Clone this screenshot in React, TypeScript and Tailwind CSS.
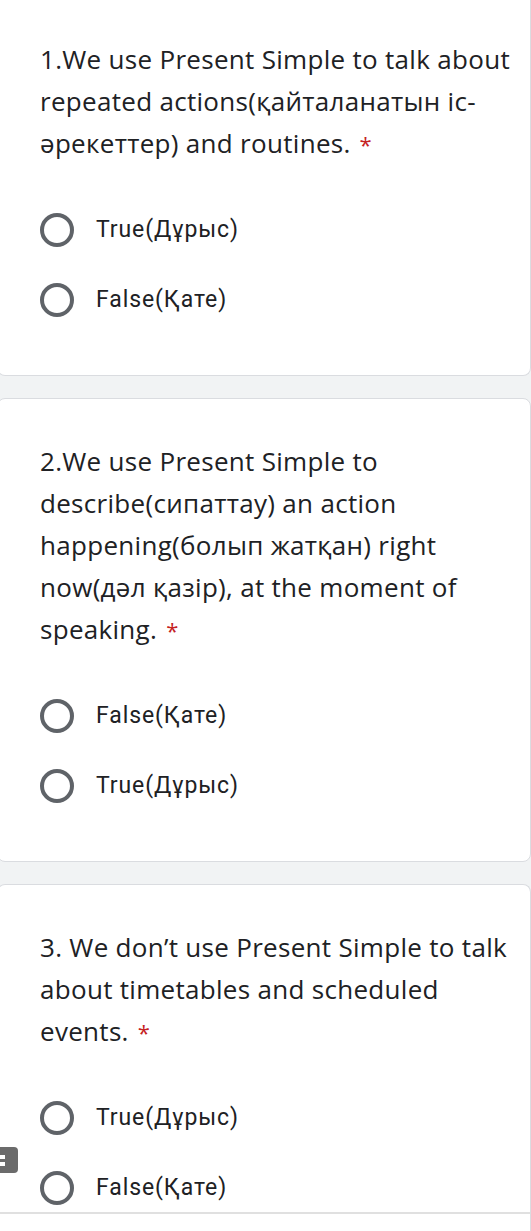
import React from 'react';

type Question = {
  lines: string[];
  options: string[];
  first?: boolean;
  bottomRule?: boolean;
};

const questions: Question[] = [
  {
    lines: [
      '1.We use Present Simple to talk about',
      'repeated actions(қайталанатын іс-',
      'әрекеттер) and routines.',
    ],
    options: ['True(Дұрыс)', 'False(Қате)'],
    first: true,
  },
  {
    lines: [
      '2.We use Present Simple to',
      'describe(сипаттау) an action',
      'happening(болып жатқан) right',
      'now(дәл қазір), at the moment of',
      'speaking.',
    ],
    options: ['False(Қате)', 'True(Дұрыс)'],
  },
  {
    lines: [
      '3. We don’t use Present Simple to talk',
      'about timetables and scheduled',
      'events.',
    ],
    options: ['True(Дұрыс)', 'False(Қате)'],
    bottomRule: true,
  },
];

const Radio = () => (
  <span className="w-[34px] h-[34px] rounded-full border-[4px] border-[#5f6368] shrink-0" />
);

const QuestionCard = ({ q }: { q: Question }) => (
  <div
    className={`relative -ml-[3px] bg-white border border-[#dadce0] rounded-lg pl-[42px] pr-4 ${
      q.first ? 'border-t-0 rounded-t-none pt-[38px]' : 'pt-[41px]'
    } ${q.bottomRule ? 'pb-0 border-b-0 rounded-b-none' : 'pb-[51px]'}`}
  >
    <div className="text-[26px] leading-[42px] text-[#202124] font-['Open_Sans',sans-serif] tracking-[0.3px]">
      {q.lines.map((l, i) => (
        <div key={i} className="whitespace-nowrap">
          {l}
          {i === q.lines.length - 1 && <span className="text-[#c5221f] text-[22px] ml-[9px]">*</span>}
        </div>
      ))}
    </div>
    <div className="mt-[41px] flex flex-col gap-[22px]">
      {q.options.map((o, i) => (
        <div key={i} className="h-[48px] flex items-center gap-[22px]">
          <Radio />
          <span className="text-[23px] text-[#202124] font-['Roboto',sans-serif] tracking-[0.9px]">{o}</span>
        </div>
      ))}
    </div>
    {q.bottomRule && <div className="-ml-[42px] -mr-4 h-[2px] bg-[#e0e0e0] mb-[30px]" />}
  </div>
);

export default function App() {
  return (
    <div className="w-[531px] min-h-[1231px] bg-[#f1f3f4] overflow-hidden relative">
      <div className="flex flex-col gap-[22px]">
        {questions.map((q, i) => (
          <QuestionCard key={i} q={q} />
        ))}
      </div>
      {/* floating side badge */}
      <div className="absolute left-[-6px] top-[1147px] w-[24px] h-[26px] rounded-[4px] bg-[#6b6b6b] flex flex-col justify-center gap-[3px] pl-[6px]">
        <span className="block w-[5px] h-[4px] bg-white" />
        <span className="block w-[5px] h-[4px] bg-white" />
      </div>
    </div>
  );
}
